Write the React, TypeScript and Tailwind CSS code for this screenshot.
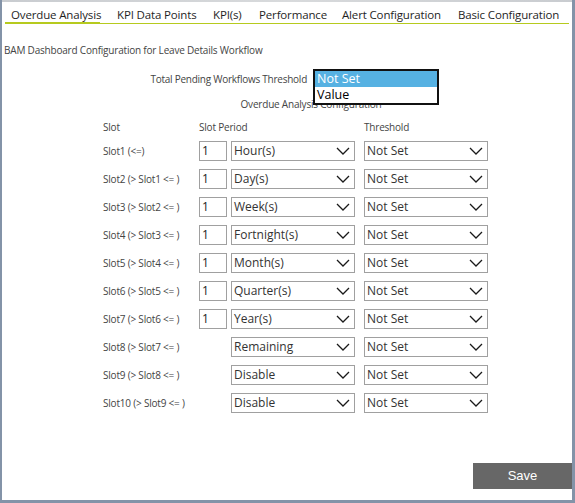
import React from "react";

type Row = { label: string; count?: string; period: string };

const rows: Row[] = [
  { label: "Slot1 (<=)", count: "1", period: "Hour(s)" },
  { label: "Slot2 (> Slot1 <= )", count: "1", period: "Day(s)" },
  { label: "Slot3 (> Slot2 <= )", count: "1", period: "Week(s)" },
  { label: "Slot4 (> Slot3 <= )", count: "1", period: "Fortnight(s)" },
  { label: "Slot5 (> Slot4 <= )", count: "1", period: "Month(s)" },
  { label: "Slot6 (> Slot5 <= )", count: "1", period: "Quarter(s)" },
  { label: "Slot7 (> Slot6 <= )", count: "1", period: "Year(s)" },
  { label: "Slot8 (> Slot7 <= )", period: "Remaining" },
  { label: "Slot9 (> Slot8 <= )", period: "Disable" },
  { label: "Slot10 (> Slot9 <= )", period: "Disable" },
];

// widths picked so every label starts where the original one does
const tabs = [
  { name: "Overdue Analysis", cls: "w-[95px] pl-[6px]" },
  { name: "KPI Data Points", cls: "w-[112px] pl-[17px]" },
  { name: "KPI(s)", cls: "w-[47px] pl-[1px]" },
  { name: "Performance", cls: "w-[83px] pl-[0px]" },
  { name: "Alert Configuration", cls: "w-[116px] pl-[0px]" },
  { name: "Basic Configuration", cls: "w-[110px] pl-[0px]" },
];

function Chevron() {
  return (
    <svg width="14" height="8" viewBox="0 0 14 8" className="shrink-0">
      <polyline
        points="1,1 7,7 13,1"
        fill="none"
        stroke="#1a1a1a"
        strokeWidth="1.3"
      />
    </svg>
  );
}

// fake closed <select>, native ones render differently per browser
function Select({ value }: { value: string }) {
  return (
    <div className="flex h-[20px] w-[124px] items-center justify-between border border-[#a0a0a0] bg-white pl-[2px] pr-[4px] text-[12px] text-[#333]">
      <span>{value}</span>
      <Chevron />
    </div>
  );
}

export default function App() {
  return (
    <div
      className="flex h-[503px] w-[575px] flex-col overflow-hidden border-b-[3px] border-l-2 border-r-[3px] border-[#8393a8] bg-white"
      style={{ fontFamily: '"Open Sans", "Noto Sans", sans-serif' }}
    >
      <div className="h-[2px] shrink-0 bg-gradient-to-r from-[#c9ccd0] via-[#d8dadc] to-[#c9ccd0]" />

      {/* tab strip */}
      <div className="mx-[3px] flex shrink-0 shadow-[inset_0_-1px_0_#b6ca1e]">
        {tabs.map((t, i) => (
          <div
            key={t.name}
            className={
              "shrink-0 whitespace-nowrap border-b-2 pt-[5px] text-[11.5px] leading-[15px] tracking-[-0.15px] text-[#1f1f1f] " +
              t.cls +
              (i === 0 ? " border-[#b6ca1e]" : " border-transparent")
            }
          >
            {t.name}
          </div>
        ))}
      </div>

      <div className="mt-[19px] pl-[2px] text-[10px] leading-[14px] tracking-[-0.2px] text-[#444]">
        BAM Dashboard Configuration for Leave Details Workflow
      </div>

      <div className="mt-[12px] flex h-[20px] shrink-0 items-center">
        <div className="w-[305px] text-right text-[10px] tracking-[-0.25px] text-[#444]">
          Total Pending Workflows Threshold
        </div>
        <div className="relative ml-[6px] h-[20px] w-[126px]">
          <div className="absolute left-0 top-0 z-10 w-[126px] border-2 border-[#111] bg-white text-[12.5px] leading-[16px] text-black">
            <div className="bg-[#56b1e2] pl-[2px] text-white">Not Set</div>
            <div className="pl-[2px]">Value</div>
          </div>
        </div>
      </div>

      <div className="mt-[8px] pl-[48px] text-center text-[10px] leading-[14px] tracking-[-0.2px] text-[#444]">
        Overdue Analysis Configuration
      </div>

      <div className="mt-[9px] flex pl-[101px] text-[10px] leading-[14px] tracking-[-0.2px] text-[#444]">
        <div className="w-[96px]">Slot</div>
        <div className="w-[165px]">Slot Period</div>
        <div>Threshold</div>
      </div>

      <div className="mt-[7px] flex flex-col gap-[8px] pl-[101px]">
        {rows.map((r) => (
          <div key={r.label} className="flex h-[20px] items-center">
            <div className="w-[96px] text-[10px] tracking-[-0.2px] text-[#444]">
              {r.label}
            </div>
            <div className="w-[28px]">
              {r.count && (
                <div className="flex h-[20px] w-[28px] items-center border border-[#a0a0a0] pl-[2px] text-[12px] text-[#222]">
                  {r.count}
                </div>
              )}
            </div>
            <div className="ml-[4px]">
              <Select value={r.period} />
            </div>
            <div className="ml-[9px]">
              <Select value="Not Set" />
            </div>
          </div>
        ))}
      </div>

      <div className="mt-[50px] flex justify-end">
        <button
          type="button"
          className="h-[26px] w-[99px] bg-[#676767] text-[13px] text-white"
          style={{ fontFamily: '"Liberation Sans", Arial, sans-serif' }}
        >
          Save
        </button>
      </div>
    </div>
  );
}
